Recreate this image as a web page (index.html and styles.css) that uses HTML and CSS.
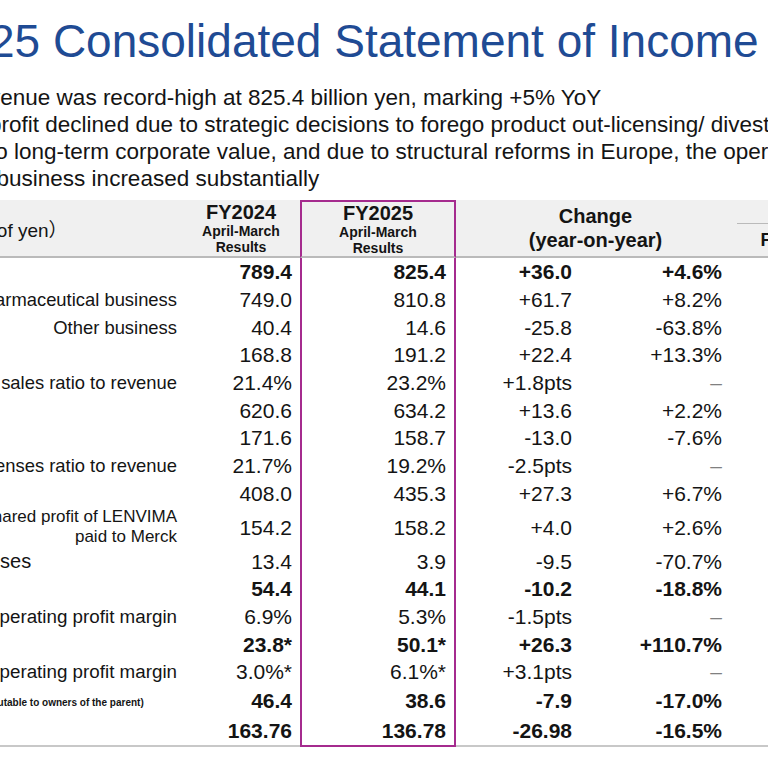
FILE: index.html
```html
<!DOCTYPE html>
<html lang="en">
<head>
    <meta charset="UTF-8">
    <meta name="viewport" content="width=device-width, initial-scale=1.0">
    <title>FY2025 Consolidated Statement of Income</title>
    <link rel="stylesheet" href="styles.css">
</head>
<body>
    <div class="slide">
        <h1 class="title">FY2025 Consolidated Statement of Income (IFRS)</h1>

        <div class="summary">
            <p>FY2025 revenue was record-high at 825.4 billion yen, marking +5% YoY</p>
            <p>Operating profit declined due to strategic decisions to forego product out-licensing/ divestitures that</p>
            <p>contribute to long-term corporate value, and due to structural reforms in Europe, the operating profit</p>
            <p>of the core business increased substantially</p>
        </div>

        <table class="income">
            <colgroup>
                <col class="col-label">
                <col class="col-prev">
                <col class="col-cur">
                <col class="col-chg">
                <col class="col-pct">
                <col class="col-fc">
                <col class="col-fc">
            </colgroup>
            <thead>
                <tr>
                    <th class="unit">（Billions of yen）</th>
                    <th class="period">
                        <span class="fy">FY2024</span>
                        <span class="sub">April-March</span>
                        <span class="sub">Results</span>
                    </th>
                    <th class="period hl">
                        <span class="fy">FY2025</span>
                        <span class="sub">April-March</span>
                        <span class="sub">Results</span>
                    </th>
                    <th class="change" colspan="2">
                        <span>Change</span>
                        <span>(year-on-year)</span>
                    </th>
                    <th class="forecast" colspan="2">
                        <div class="group">FY2025</div>
                        <div class="split">
                            <span>Forecast</span>
                            <span>Achievement</span>
                        </div>
                    </th>
                </tr>
            </thead>
            <tbody>
                <tr class="total">
                    <td class="label">Revenue</td>
                    <td class="num">789.4</td>
                    <td class="num hl">825.4</td>
                    <td class="num chg">+36.0</td>
                    <td class="num pct">+4.6%</td>
                    <td></td><td></td>
                </tr>
                <tr>
                    <td class="label sub">Pharmaceutical business</td>
                    <td class="num">749.0</td>
                    <td class="num hl">810.8</td>
                    <td class="num chg">+61.7</td>
                    <td class="num pct">+8.2%</td>
                    <td></td><td></td>
                </tr>
                <tr>
                    <td class="label sub">Other business</td>
                    <td class="num">40.4</td>
                    <td class="num hl">14.6</td>
                    <td class="num chg">-25.8</td>
                    <td class="num pct">-63.8%</td>
                    <td></td><td></td>
                </tr>
                <tr>
                    <td class="label">Cost of sales</td>
                    <td class="num">168.8</td>
                    <td class="num hl">191.2</td>
                    <td class="num chg">+22.4</td>
                    <td class="num pct">+13.3%</td>
                    <td></td><td></td>
                </tr>
                <tr>
                    <td class="label sub">Cost of sales ratio to revenue</td>
                    <td class="num">21.4%</td>
                    <td class="num hl">23.2%</td>
                    <td class="num chg">+1.8pts</td>
                    <td class="num pct dash">–</td>
                    <td></td><td></td>
                </tr>
                <tr>
                    <td class="label">Gross profit</td>
                    <td class="num">620.6</td>
                    <td class="num hl">634.2</td>
                    <td class="num chg">+13.6</td>
                    <td class="num pct">+2.2%</td>
                    <td></td><td></td>
                </tr>
                <tr>
                    <td class="label">R&amp;D expenses</td>
                    <td class="num">171.6</td>
                    <td class="num hl">158.7</td>
                    <td class="num chg">-13.0</td>
                    <td class="num pct">-7.6%</td>
                    <td></td><td></td>
                </tr>
                <tr>
                    <td class="label sub">R&amp;D expenses ratio to revenue</td>
                    <td class="num">21.7%</td>
                    <td class="num hl">19.2%</td>
                    <td class="num chg">-2.5pts</td>
                    <td class="num pct dash">–</td>
                    <td></td><td></td>
                </tr>
                <tr>
                    <td class="label">SG&amp;A expenses</td>
                    <td class="num">408.0</td>
                    <td class="num hl">435.3</td>
                    <td class="num chg">+27.3</td>
                    <td class="num pct">+6.7%</td>
                    <td></td><td></td>
                </tr>
                <tr class="tall">
                    <td class="label sub">Of which, shared profit of LENVIMA<br>paid to Merck</td>
                    <td class="num">154.2</td>
                    <td class="num hl">158.2</td>
                    <td class="num chg">+4.0</td>
                    <td class="num pct">+2.6%</td>
                    <td></td><td></td>
                </tr>
                <tr>
                    <td class="label">Other income and expenses</td>
                    <td class="num">13.4</td>
                    <td class="num hl">3.9</td>
                    <td class="num chg">-9.5</td>
                    <td class="num pct">-70.7%</td>
                    <td></td><td></td>
                </tr>
                <tr class="total">
                    <td class="label">Operating profit</td>
                    <td class="num">54.4</td>
                    <td class="num hl">44.1</td>
                    <td class="num chg">-10.2</td>
                    <td class="num pct">-18.8%</td>
                    <td></td><td></td>
                </tr>
                <tr>
                    <td class="label sub margin">Operating profit margin</td>
                    <td class="num">6.9%</td>
                    <td class="num hl">5.3%</td>
                    <td class="num chg">-1.5pts</td>
                    <td class="num pct dash">–</td>
                    <td></td><td></td>
                </tr>
                <tr class="total">
                    <td class="label">Core operating profit</td>
                    <td class="num">23.8*</td>
                    <td class="num hl">50.1*</td>
                    <td class="num chg">+26.3</td>
                    <td class="num pct">+110.7%</td>
                    <td></td><td></td>
                </tr>
                <tr>
                    <td class="label sub margin">Core operating profit margin</td>
                    <td class="num">3.0%*</td>
                    <td class="num hl">6.1%*</td>
                    <td class="num chg">+3.1pts</td>
                    <td class="num pct dash">–</td>
                    <td></td><td></td>
                </tr>
                <tr class="total">
                    <td class="label">Profit for the year <span class="note">(attributable to owners of the parent)</span></td>
                    <td class="num">46.4</td>
                    <td class="num hl">38.6</td>
                    <td class="num chg">-7.9</td>
                    <td class="num pct">-17.0%</td>
                    <td></td><td></td>
                </tr>
                <tr class="total">
                    <td class="label">EPS (yen)</td>
                    <td class="num">163.76</td>
                    <td class="num hl">136.78</td>
                    <td class="num chg">-26.98</td>
                    <td class="num pct">-16.5%</td>
                    <td></td><td></td>
                </tr>
            </tbody>
        </table>
    </div>
</body>
</html>
```

FILE: styles.css
```css
:root {
    --title-color: #1f4b94;
    --text-color: #141414;
    --header-bg: #f0f0f0;
    --rule-color: #bababa;
    --highlight: #a52b8e;
}

html, body {
    margin: 0;
    overflow: hidden;
    background: #ffffff;
}

body {
    font-family: "Liberation Sans", Arial, "Noto Sans CJK JP", sans-serif;
    color: var(--text-color);
}

/* the slide is wider than the window, its left part is cut off */
.slide {
    margin-left: -222px;
    width: 1400px;
}

.title {
    margin: 18px 0 0 101px;
    font-size: 46px;
    line-height: 46px;
    font-weight: normal;
    color: var(--title-color);
    white-space: nowrap;
}

.summary {
    margin: 20px 0 0 106px;
    font-size: 22.5px;
    line-height: 27px;
    white-space: nowrap;
}

.summary p {
    margin: 0;
}

.income {
    margin-top: 8px;
    border-collapse: separate;
    border-spacing: 0;
    table-layout: fixed;
    width: 1209px;
}

.col-label { width: 404px; }
.col-prev { width: 118px; }
.col-cur { width: 156px; }
.col-chg { width: 128px; }
.col-pct { width: 151px; }
.col-fc { width: 126px; }

.income thead tr {
    height: 58px;
}

.income th {
    padding: 0;
    background: var(--header-bg);
    border-bottom: 2px solid var(--rule-color);
    font-weight: bold;
    vertical-align: middle;
    white-space: nowrap;
}

.unit {
    font-size: 19px;
    font-weight: normal !important;
    text-align: center;
    padding-left: 20px !important;
}

.period span {
    display: block;
}

.period .fy {
    font-size: 20px;
    line-height: 22px;
}

.period .sub {
    font-size: 14px;
    line-height: 16px;
}

.change span {
    display: block;
    font-size: 20px;
    line-height: 24px;
}

.forecast {
    font-size: 18px;
    vertical-align: top !important;
}

.forecast .group {
    height: 23px;
    margin: 0 2px;
    border-bottom: 1px solid var(--rule-color);
    line-height: 23px;
}

.forecast .split {
    display: flex;
    line-height: 32px;
}

.forecast .split span {
    flex: 1;
    text-align: center;
}

.income td {
    height: 27.7px;
    padding: 0;
    font-size: 21px;
    line-height: 27px;
    white-space: nowrap;
}

.income td.label {
    font-size: 20px;
    padding-left: 3px;
}

.income td.sub {
    font-size: 18.4px;
    text-align: right;
    padding-right: 5px;
}

.income td.margin {
    font-size: 18.8px;
}

.income tr.tall td {
    height: 40px;
}

.income tr.tall td.sub {
    font-size: 17px;
    line-height: 20px;
}

.income td.num {
    text-align: right;
    padding-right: 8px;
}

.income td.chg {
    padding-right: 12px;
}

.income td.pct {
    padding-right: 13px;
}

.income td.dash {
    color: #808080;
}

.total td {
    font-weight: bold;
}

.note {
    margin-left: 16px;
    font-size: 10px;
}

.income .hl {
    border-left: 2px solid var(--highlight);
    border-right: 2px solid var(--highlight);
}

.income th.hl {
    border-top: 2px solid var(--highlight);
}

.income tbody tr:last-child td {
    height: 29px;
    border-bottom: 2px solid #c8c8c8;
}

.income tbody tr:last-child td.hl {
    border-bottom-color: var(--highlight);
}
```
